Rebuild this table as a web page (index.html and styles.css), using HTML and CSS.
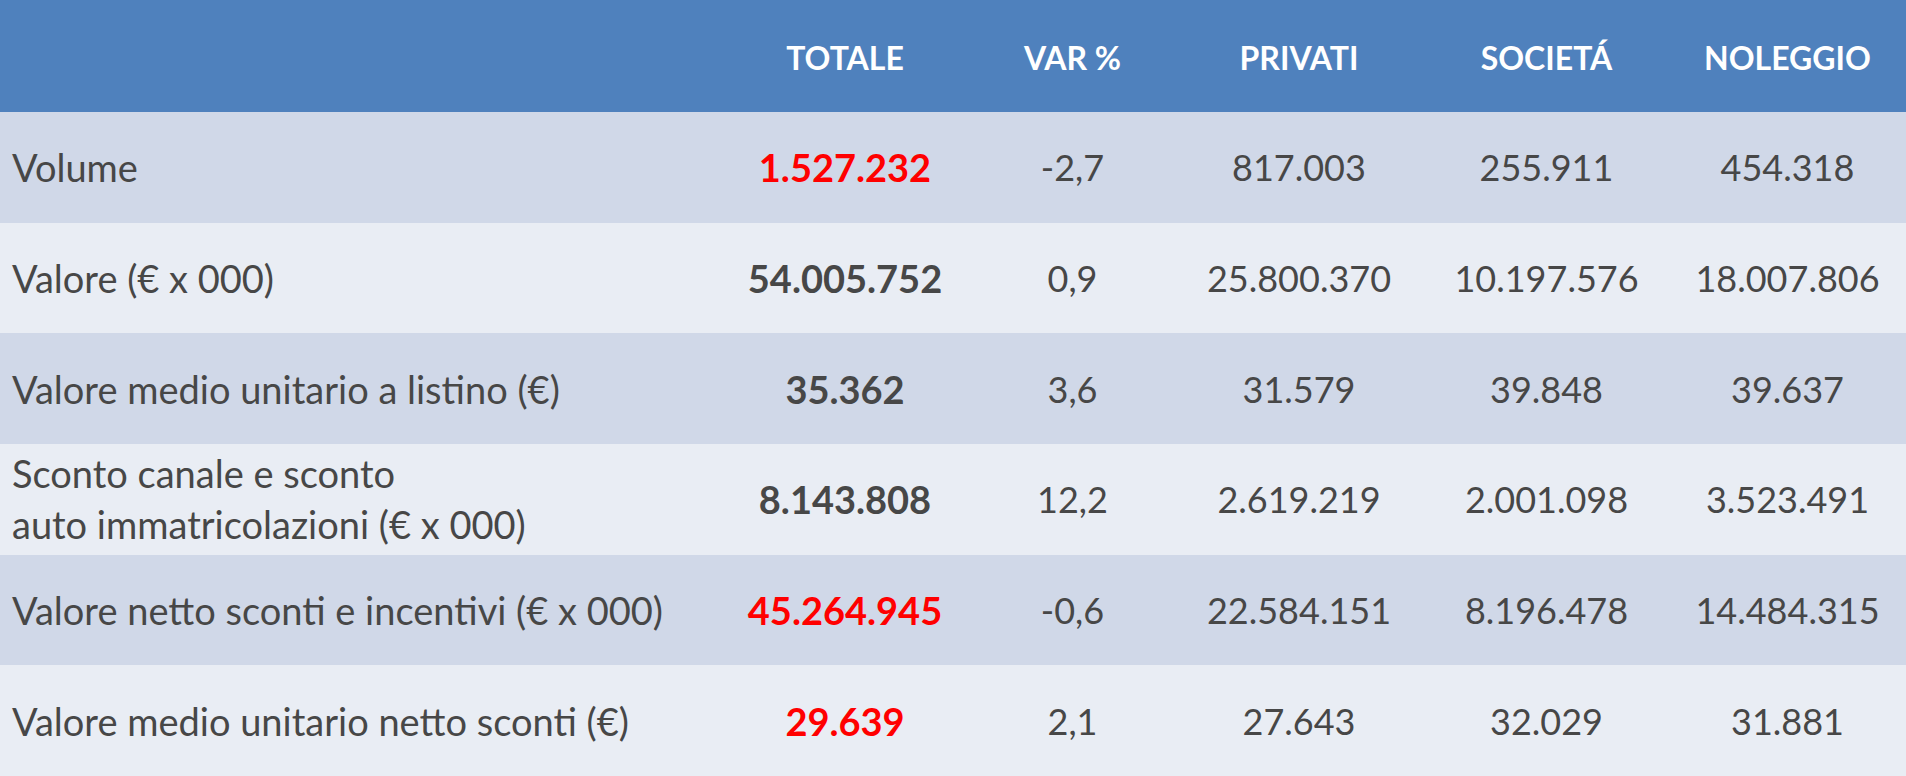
FILE: index.html
```html
<!DOCTYPE html>
<html lang="it">
<head>
<meta charset="utf-8">
<title>Mercato auto</title>
<link rel="stylesheet" href="styles.css">
</head>
<body>
<div class="table">
  <div class="row head">
    <div class="cell label"></div>
    <div class="cell">TOTALE</div>
    <div class="cell">VAR %</div>
    <div class="cell priv">PRIVATI</div>
    <div class="cell">SOCIETÁ</div>
    <div class="cell">NOLEGGIO</div>
  </div>
  <div class="row dark">
    <div class="cell label">Volume</div>
    <div class="cell total red">1.527.232</div>
    <div class="cell">-2,7</div>
    <div class="cell priv">817.003</div>
    <div class="cell">255.911</div>
    <div class="cell">454.318</div>
  </div>
  <div class="row light">
    <div class="cell label">Valore (€ x 000)</div>
    <div class="cell total">54.005.752</div>
    <div class="cell">0,9</div>
    <div class="cell priv">25.800.370</div>
    <div class="cell">10.197.576</div>
    <div class="cell">18.007.806</div>
  </div>
  <div class="row dark">
    <div class="cell label">Valore medio unitario a listino (€)</div>
    <div class="cell total">35.362</div>
    <div class="cell">3,6</div>
    <div class="cell priv">31.579</div>
    <div class="cell">39.848</div>
    <div class="cell">39.637</div>
  </div>
  <div class="row light">
    <div class="cell label two">Sconto canale e sconto<br>auto immatricolazioni (€ x 000)</div>
    <div class="cell total">8.143.808</div>
    <div class="cell">12,2</div>
    <div class="cell priv">2.619.219</div>
    <div class="cell">2.001.098</div>
    <div class="cell">3.523.491</div>
  </div>
  <div class="row dark">
    <div class="cell label">Valore netto sconti e incentivi (€ x 000)</div>
    <div class="cell total red">45.264.945</div>
    <div class="cell">-0,6</div>
    <div class="cell priv">22.584.151</div>
    <div class="cell">8.196.478</div>
    <div class="cell">14.484.315</div>
  </div>
  <div class="row light">
    <div class="cell label">Valore medio unitario netto sconti (€)</div>
    <div class="cell total red">29.639</div>
    <div class="cell">2,1</div>
    <div class="cell priv">27.643</div>
    <div class="cell">32.029</div>
    <div class="cell">31.881</div>
  </div>
</div>
</body>
</html>
```

FILE: styles.css
```css
html, body {
  margin: 0;
  padding: 0;
}
body {
  width: 1906px;
  height: 776px;
  overflow: hidden;
  font-family: Lato, "Open Sans", "Liberation Sans", sans-serif;
  color: #474747;
}
.table {
  display: grid;
  grid-template-rows: 112px repeat(6, 1fr);
  height: 776px;
}
.row {
  display: grid;
  grid-template-columns: 731px 228px 227px 238px 245px 237px;
  align-items: center;
}
.cell {
  text-align: center;
  font-size: 36px;
  white-space: nowrap;
}
.cell.priv {
  padding-right: 12px;
}
.cell.label {
  text-align: left;
  padding-left: 12px;
  font-size: 38px;
}
.cell.two {
  line-height: 51px;
}
.head {
  background: #4f81bd;
  color: #ffffff;
}
.head .cell {
  font-weight: 700;
  font-size: 32px;
  padding-top: 2px;
}
.dark {
  background: #d0d8e8;
}
.light {
  background: #e9edf4;
}
.total {
  font-weight: 700;
  font-size: 38px;
}
.red {
  color: #ff0000;
}
```
